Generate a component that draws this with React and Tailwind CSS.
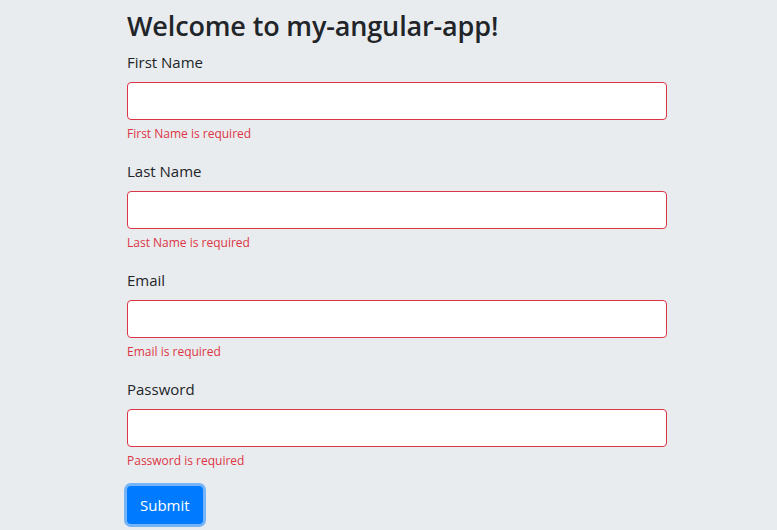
import React from "react";

const fields = [
  { label: "First Name", type: "text" },
  { label: "Last Name", type: "text" },
  { label: "Email", type: "email" },
  { label: "Password", type: "password" },
];

export default function App() {
  return (
    <div
      className="min-h-screen bg-[#e9ecef] text-[#212529]"
      style={{ fontFamily: '"Open Sans", "Noto Sans", sans-serif' }}
    >
      <div className="w-[540px] ml-[127px]">
        {/* title */}
        <h2 className="pt-[10px] mb-2 text-[27px] leading-[1.2] font-semibold tracking-[-0.15px]">
          Welcome to my-angular-app!
        </h2>

        <form onSubmit={(e) => e.preventDefault()}>
          {fields.map((f) => (
            <div key={f.label} className="mb-4">
              <label className="block mb-2 text-[15px] leading-6">{f.label}</label>
              <input
                type={f.type}
                className="block w-full h-[38px] px-3 rounded bg-white border border-[#dc3545] outline-none"
              />
              <div className="mt-1 text-[12px] leading-[19px] text-[#dc3545]">
                {f.label} is required
              </div>
            </div>
          ))}

          <button
            type="submit"
            className="h-[38px] px-[13px] rounded bg-[#007bff] text-white text-[15px] shadow-[0_0_0_3px_rgba(0,123,255,0.5)]"
          >
            Submit
          </button>
        </form>
      </div>
    </div>
  );
}
